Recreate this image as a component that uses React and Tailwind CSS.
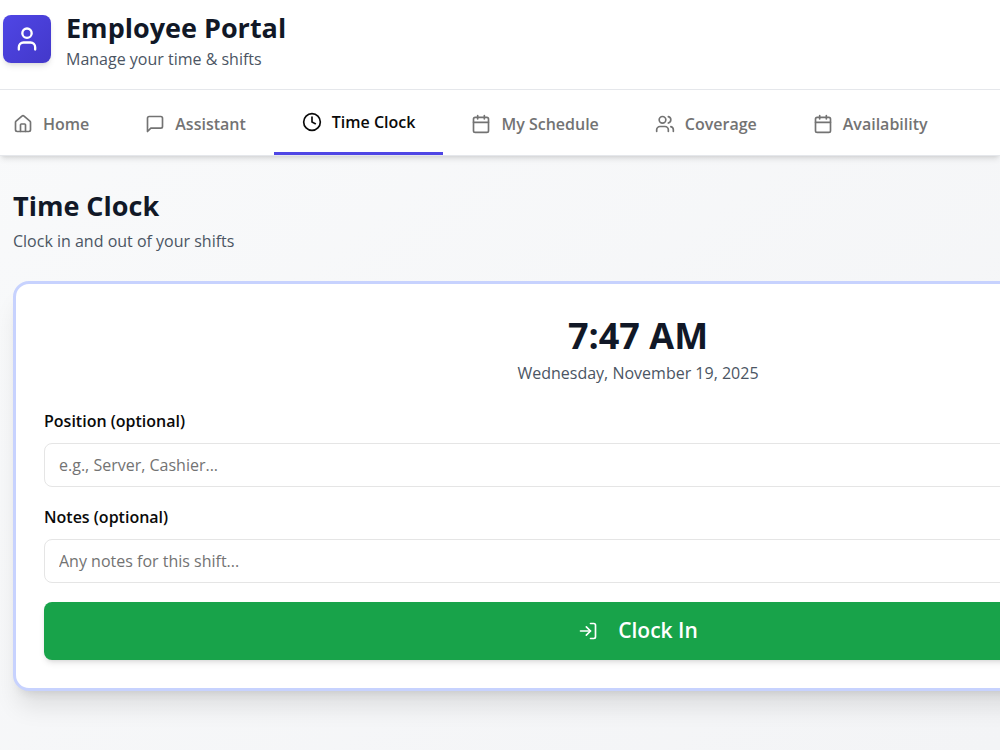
import React from 'react';
import { House, Clock, Calendar, Users, User, LogIn } from 'lucide-react';

const MessageIcon = ({ className, strokeWidth = 2 }) => (
    <svg
        viewBox="0 0 24 24"
        fill="none"
        stroke="currentColor"
        strokeWidth={strokeWidth}
        strokeLinecap="round"
        strokeLinejoin="round"
        className={className}
        aria-hidden="true"
    >
        <path d="M21 15a2 2 0 0 1-2 2H7l-4 4V5a2 2 0 0 1 2-2h14a2 2 0 0 1 2 2z" />
    </svg>
);

const tabs = [
    { id: 'home', label: 'Home', icon: House },
    { id: 'assistant', label: 'Assistant', icon: MessageIcon },
    { id: 'clock', label: 'Time Clock', icon: Clock },
    { id: 'schedule', label: 'My Schedule', icon: Calendar },
    { id: 'coverage', label: 'Coverage', icon: Users },
    { id: 'availability', label: 'Availability', icon: Calendar },
];

const NavTab = ({ label, icon: Icon, active, onClick }) => (
    <button
        type="button"
        onClick={onClick}
        aria-current={active ? 'page' : undefined}
        className={
            active
                ? 'flex items-center gap-2.5 px-7 pt-0.5 border-b-3 border-[#4f46e5] text-base font-semibold text-[#0a0a0a] whitespace-nowrap'
                : 'flex items-center gap-2.5 px-7 pt-0.5 text-base font-semibold text-[#737373] whitespace-nowrap'
        }
    >
        <Icon className="size-5 shrink-0" strokeWidth={2} />
        {label}
    </button>
);

const Field = ({ id, label, placeholder }) => (
    <div className="flex flex-col gap-2.5">
        <label htmlFor={id} className="text-base leading-6 font-semibold text-[#0a0a0a]">{label}</label>
        <input
            id={id}
            type="text"
            placeholder={placeholder}
            className="h-11 w-full rounded-lg border border-[#e5e5e5] bg-white px-3.5 text-base placeholder:text-[#737373]"
        />
    </div>
);

const App = () => {
    const [tab, setTab] = React.useState('clock');

    return (
        <div className="min-h-screen overflow-x-hidden bg-linear-to-br from-[#f9fafb] to-[#f3f4f6] font-['Open_Sans',sans-serif]">
            <header className="bg-white shadow-md border-b border-[#e5e7eb]">
                <div className="flex items-center gap-[15px] px-[3px] pt-2 pb-[19px] border-b border-[#e5e7eb]">
                    <div className="size-12 shrink-0 rounded-lg bg-linear-to-br from-[#4f46e5] to-[#4338ca] shadow-md flex items-center justify-center">
                        <User className="size-7 text-white" />
                    </div>
                    <div>
                        <h1 className="text-[27px] leading-10 font-bold text-[#111827]">Employee Portal</h1>
                        <p className="text-base leading-[22px] text-[#4b5563]">Manage your time &amp; shifts</p>
                    </div>
                </div>
                <nav className="-ml-[15px] flex h-[65px]">
                    {tabs.map((t) => (
                        <NavTab key={t.id} label={t.label} icon={t.icon} active={t.id === tab} onClick={() => setTab(t.id)} />
                    ))}
                </nav>
            </header>

            <main className="min-w-[1276px] px-[13px] pt-8">
                <h2 className="text-[27px] leading-9 font-bold text-[#111827]">Time Clock</h2>
                <p className="mt-[5px] text-base leading-6 text-[#4b5563]">Clock in and out of your shifts</p>

                <section className="mt-7 rounded-2xl border-3 border-[#c7d2fe] bg-white px-7 pt-8 pb-7 shadow-xl">
                    <div className="text-center">
                        <p className="text-4xl leading-10 font-bold text-[#111827]">7:47 AM</p>
                        <p className="mt-[5px] text-base leading-6 text-[#4b5563]">Wednesday, November 19, 2025</p>
                    </div>
                    <form className="mt-6 flex flex-col gap-[18px]" onSubmit={(e) => e.preventDefault()}>
                        <Field id="position" label="Position (optional)" placeholder="e.g., Server, Cashier..." />
                        <Field id="notes" label="Notes (optional)" placeholder="Any notes for this shift..." />
                        <button type="submit" className="mt-px flex h-[58px] items-center justify-center gap-5 rounded-lg bg-[#18a34a] text-[21px] font-semibold text-white shadow-md">
                            <LogIn className="size-5" />
                            Clock In
                        </button>
                    </form>
                </section>
            </main>
        </div>
    );
};

export default App;
